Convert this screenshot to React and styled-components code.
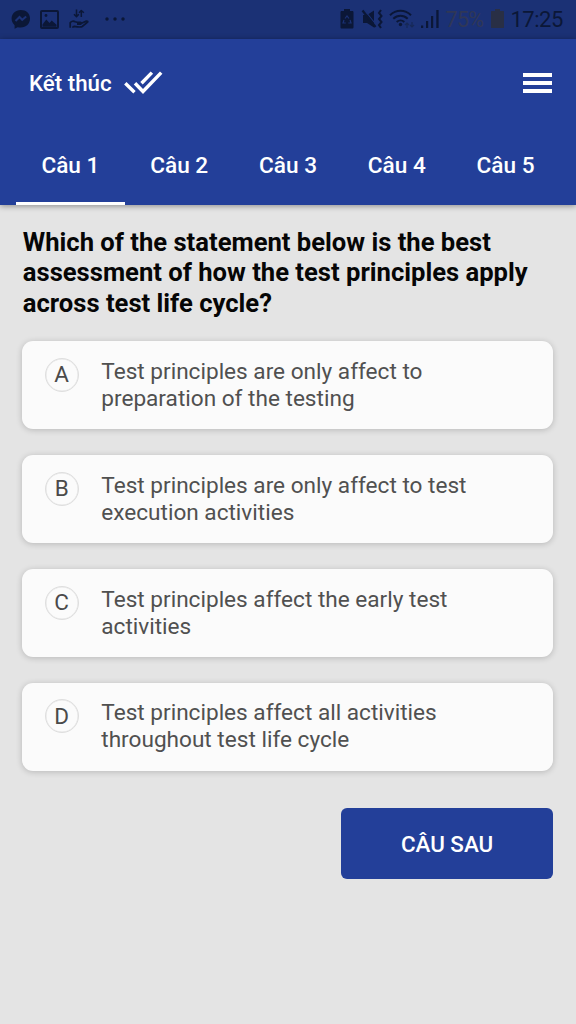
import React from "react";
import styled, { createGlobalStyle } from "styled-components";

const GlobalStyle = createGlobalStyle`
  *, *::before, *::after { box-sizing: border-box; }
  body { margin: 0; background: #e4e4e4; }
  button { font: inherit; color: inherit; background: none; border: 0; padding: 0; }
`;

const Screen = styled.div`
  width: 576px;
  height: 1024px;
  overflow: hidden;
  display: flex;
  flex-direction: column;
  background: #e4e4e4;
  font-family: Roboto, sans-serif;
`;

const StatusBar = styled.div`
  height: 38.5px;
  flex: none;
  display: flex;
  justify-content: space-between;
  padding: 0 12px 0 10px;
  background: #1b3175;
  color: #0b1737;
`;

const StatusGroup = styled.div`
  display: flex;
  align-items: center;
`;

const StatusIcon = styled.svg`
  display: block;
  flex: none;
  margin-right: ${(p) => p.$gap || 0}px;
`;

const Battery = styled.span`
  width: 37px;
  margin-right: 8px;
  font-size: 21.5px;
  line-height: 26px;
  padding-top: 2px;
  letter-spacing: -0.7px;
  white-space: nowrap;
  color: #2f3757;
`;

const Clock = styled.span`
  width: 53.5px;
  font-size: 22px;
  line-height: 26px;
  padding-top: 2px;
  letter-spacing: -0.5px;
  white-space: nowrap;
`;

const Header = styled.header`
  flex: none;
  height: 166.5px;
  position: relative;
  display: flex;
  flex-direction: column;
  background: #233f99;
  color: #fff;
  box-shadow: 0 1px 6px rgba(0, 0, 0, 0.4);
`;

const TitleRow = styled.div`
  height: 89px;
  display: flex;
  align-items: center;
  justify-content: space-between;
  padding: 0 24px 0 29px;
`;

const FinishButton = styled.button`
  display: flex;
  align-items: center;
  gap: 12px;
  font-size: 22.3px;
  font-weight: 500;
  line-height: 28px;
`;

const MenuButton = styled.button`
  width: 29px;
  display: grid;
  gap: 4px;
`;

const MenuLine = styled.span`
  height: 4px;
  background: #fff;
`;

const Tabs = styled.nav`
  flex: 1;
  display: flex;
  padding-left: 16px;
`;

const Tab = styled.button`
  width: 108.8px;
  flex: none;
  padding-top: 1px;
  border-bottom: 3.5px solid ${(p) => (p.$active ? "#fff" : "transparent")};
  font-size: 22.6px;
  font-weight: 500;
`;

const Content = styled.main`
  display: flex;
  flex-direction: column;
  padding: 22.2px 22.7px 0 22.3px;
`;

const Question = styled.h1`
  margin: 0 0 0 0.5px;
  font-size: 25.6px;
  font-weight: 700;
  line-height: 30.3px;
  white-space: pre-line;
  color: #060606;
`;

const Options = styled.div`
  margin-top: 23.1px;
  display: grid;
  gap: 25.7px;
`;

const Option = styled.div`
  height: 88.1px;
  display: flex;
  align-items: flex-start;
  padding: 16.8px 22px 0 22.4px;
  border-radius: 11px;
  background: #fbfbfb;
  box-shadow: 0 1px 6px rgba(0, 0, 0, 0.2);
`;

const Letter = styled.span`
  width: 34px;
  height: 34px;
  flex: none;
  display: grid;
  place-items: center;
  margin-right: 22.6px;
  padding-bottom: 1px;
  border: 1.5px solid #dedede;
  box-shadow: inset 0 0 0 0.5px #e4e4e4;
  border-radius: 50%;
  font-size: 22.5px;
  line-height: 26px;
  color: #4a4a4a;
`;

const OptionText = styled.p`
  margin: 0;
  font-size: 22.6px;
  line-height: 27.1px;
  white-space: pre-line;
  color: #505050;
`;

const NextButton = styled.button`
  align-self: flex-end;
  width: 212.5px;
  height: 71px;
  margin-top: 37px;
  padding-top: 1px;
  border-radius: 6px;
  background: #233f99;
  color: #fff;
  font-size: 22.4px;
  font-weight: 500;
`;

const tabs = ["Câu 1", "Câu 2", "Câu 3", "Câu 4", "Câu 5"];

const options = [
  ["A", "Test principles are only affect to\npreparation of the testing"],
  ["B", "Test principles are only affect to test\nexecution activities"],
  ["C", "Test principles affect the early test\nactivities"],
  ["D", "Test principles affect all activities\nthroughout test life cycle"],
];

function MessengerIcon() {
  return (
    <StatusIcon $gap={9} width="21" height="21" viewBox="0 0 21 21">
      <path fill="currentColor" d="M10.8 1C5.4 1 1.6 4.7 1.6 9.6c0 2.8 1.2 5 3 6.6v3.5l3.1-1.5c1 .3 2 .4 3.1.4 5.3 0 9.2-3.8 9.2-9S16.1 1 10.8 1Z" />
      <path fill="none" stroke="#1b3175" strokeWidth="2" d="m5.5 12 4-4 2.7 2.8 4-3.4" />
    </StatusIcon>
  );
}

function PictureIcon() {
  return (
    <StatusIcon $gap={9.5} width="19" height="19" viewBox="0 0 19 19">
      <rect x="1" y="1" width="17" height="17" rx="1" fill="none" stroke="currentColor" strokeWidth="2" />
      <path fill="currentColor" d="m2.5 14.5 3.8-5 3.2 3.5 2.2-2.4 4.8 4.2v2h-14Z" />
      <circle cx="6" cy="5.5" r="1.4" fill="currentColor" />
    </StatusIcon>
  );
}

function HandDataIcon() {
  return (
    <StatusIcon $gap={16} width="20" height="20" viewBox="0 0 20 20" fill="none" stroke="currentColor" strokeWidth="1.5" strokeLinejoin="round">
      <path d="M7.5.5v7M5 5.2 7.5 7.7 9.8 5.2M12.3 8V1.5M10 3.8l2.3-2.3 2.5 2.3" />
      <path strokeWidth="1.7" d="M1.2 18.8v-5c1-1.7 3.3-2 5-1.1l2 .6h3.3c1 0 1 1.8 0 1.8H8M12.5 14.2l4.8-2.1c1.2-.4 1.9.5 1 1.3l-5.1 4.1c-1.4 1-5 .4-7.9-.2-1.3 0-1.5.5-1.5 1.5" />
    </StatusIcon>
  );
}

function DotsIcon() {
  return (
    <StatusIcon width="20" height="4" viewBox="0 0 20 4" fill="currentColor">
      <circle cx="2" cy="2" r="1.7" />
      <circle cx="10" cy="2" r="1.7" />
      <circle cx="18" cy="2" r="1.7" />
    </StatusIcon>
  );
}

function BatterySaverIcon() {
  return (
    <StatusIcon $gap={7} width="14" height="20" viewBox="0 0 14 20">
      <path fill="currentColor" d="M4 0h6v2h2.2c.8 0 1.3.5 1.3 1.3v15c0 .8-.5 1.2-1.3 1.2H1.8c-.8 0-1.3-.4-1.3-1.2v-15C.5 2.5 1 2 1.8 2H4Z" />
      <path fill="none" stroke="#1b3175" strokeWidth="1.2" d="m5 9.5 2-2.5 2 2.5M10 11l1 3H8.3M5.8 14H3l1-3" />
    </StatusIcon>
  );
}

function MutedIcon() {
  return (
    <StatusIcon $gap={6} width="22" height="20" viewBox="0 0 22 20">
      <path fill="currentColor" d="M2 6h4l7-4.5v17L6 14H2Z" />
      <path stroke="#1b3175" strokeWidth="1.2" d="m3 .5 12 15" />
      <path stroke="currentColor" strokeWidth="2.2" d="m1.5 1.5 13 16.5" />
      <path fill="none" stroke="currentColor" strokeWidth="2" d="m20 1-2 3 2.5 3-2.5 3 2.5 3-2.5 3 2 3" />
    </StatusIcon>
  );
}

function WifiIcon() {
  return (
    <StatusIcon $gap={6} width="26" height="20" viewBox="0 0 26 20">
      <g fill="none" stroke="currentColor" strokeWidth="2">
        <path d="M1 6.2C7 .3 16 .3 22 6.2M4.3 9.7c4.2-4 10.2-4 14.4 0M7.7 12.9c2.2-2 5.4-2 7.6 0" />
      </g>
      <circle cx="11.5" cy="15.5" r="1.7" fill="currentColor" />
      <path fill="none" stroke="#172957" strokeWidth="1.2" d="M18 19v-5m-2 2 2-2 2 2M23 13v5m-2-2 2 2 2-2" />
    </StatusIcon>
  );
}

function SignalIcon() {
  return (
    <StatusIcon $gap={7} width="18" height="20" viewBox="0 0 18 20" fill="currentColor">
      <path d="M0 16.5h2.2V19H0ZM5 12h2.2v7H5ZM10 7h2.2v12H10ZM15.3 1h2.3v18h-2.3Z" />
    </StatusIcon>
  );
}

function BatteryIcon() {
  return (
    <StatusIcon $gap={7} width="13" height="20" viewBox="0 0 13 20">
      <path fill="#292f45" d="M4 0h5v2h3c.6 0 1 .4 1 1v15c0 .6-.4 1-1 1H1c-.6 0-1-.4-1-1V3c0-.6.4-1 1-1h3Z" />
    </StatusIcon>
  );
}

function DoubleCheckIcon() {
  return (
    <svg width="39" height="24" viewBox="0 0 39 24" fill="none" stroke="#fff" strokeWidth="3.4">
      <path d="m1.3 12.3 9.2 9M11 12.2l8 8.3L37.2 1.6M17.5 12.2 27.9 1.6" />
    </svg>
  );
}

export default function App() {
  return (
    <Screen>
      <GlobalStyle />
      <StatusBar>
        <StatusGroup>
          <MessengerIcon />
          <PictureIcon />
          <HandDataIcon />
          <DotsIcon />
        </StatusGroup>
        <StatusGroup>
          <BatterySaverIcon />
          <MutedIcon />
          <WifiIcon />
          <SignalIcon />
          <Battery>75%</Battery>
          <BatteryIcon />
          <Clock>17:25</Clock>
        </StatusGroup>
      </StatusBar>
      <Header>
        <TitleRow>
          <FinishButton>
            Kết thúc
            <DoubleCheckIcon />
          </FinishButton>
          <MenuButton aria-label="Menu">
            <MenuLine />
            <MenuLine />
            <MenuLine />
          </MenuButton>
        </TitleRow>
        <Tabs>
          {tabs.map((label, i) => (
            <Tab key={label} $active={i === 0}>{label}</Tab>
          ))}
        </Tabs>
      </Header>
      <Content>
        <Question>
          {"Which of the statement below is the best\nassessment of how the test principles apply\nacross test life cycle?"}
        </Question>
        <Options>
          {options.map(([letter, text]) => (
            <Option key={letter}>
              <Letter>{letter}</Letter>
              <OptionText>{text}</OptionText>
            </Option>
          ))}
        </Options>
        <NextButton>CÂU SAU</NextButton>
      </Content>
    </Screen>
  );
}
